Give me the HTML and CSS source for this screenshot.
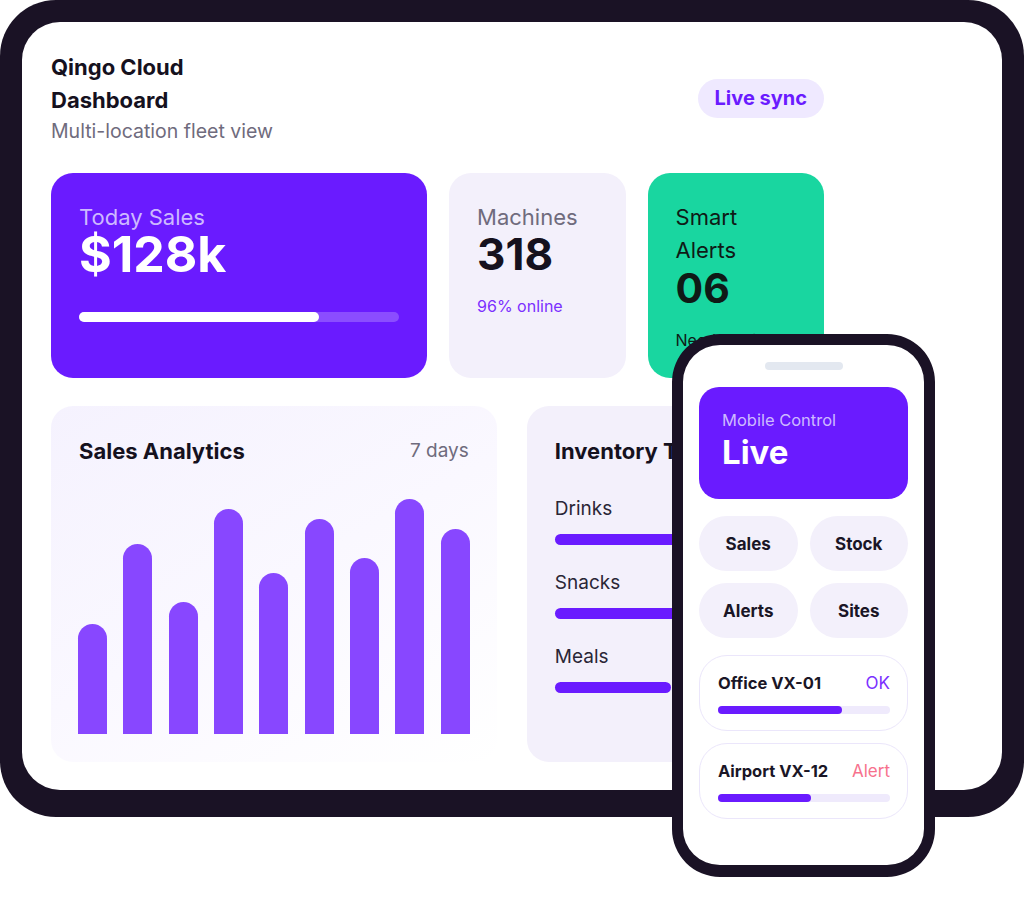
FILE: index.html
```html
<!DOCTYPE html>
<html lang="en">
<head>
<meta charset="utf-8">
<title>Qingo Cloud Dashboard</title>
<link rel="stylesheet" href="styles.css">
</head>
<body>
<div class="stage">
  <div class="tablet">
    <div class="screen">
      <div class="content">
        <header class="header">
          <div class="brand">
            <h1 class="brand-title">Qingo Cloud Dashboard</h1>
            <p class="brand-sub">Multi-location fleet view</p>
          </div>
          <span class="pill">Live sync</span>
        </header>

        <section class="stats">
          <div class="stat stat-sales">
            <div class="stat-label">Today Sales</div>
            <div class="stat-value stat-value-lg">$128k</div>
            <div class="progress"><div class="progress-fill" style="width:75%"></div></div>
          </div>
          <div class="stat stat-machines">
            <div class="stat-label">Machines</div>
            <div class="stat-value">318</div>
            <div class="stat-note">96% online</div>
          </div>
          <div class="stat stat-alerts">
            <div class="stat-label">Smart Alerts</div>
            <div class="stat-value stat-value-sm">06</div>
            <div class="stat-note">Needs action</div>
          </div>
        </section>

        <section class="panels">
          <div class="panel panel-chart">
            <div class="panel-head">
              <h2 class="panel-title">Sales Analytics</h2>
              <span class="panel-meta">7 days</span>
            </div>
            <div class="chart">
              <div class="bar" style="height:110px"></div>
              <div class="bar" style="height:190px"></div>
              <div class="bar" style="height:132px"></div>
              <div class="bar" style="height:225px"></div>
              <div class="bar" style="height:161px"></div>
              <div class="bar" style="height:215px"></div>
              <div class="bar" style="height:176px"></div>
              <div class="bar" style="height:235px"></div>
              <div class="bar" style="height:205px"></div>
            </div>
          </div>
          <div class="panel panel-inventory">
            <h2 class="panel-title">Inventory Trends</h2>
            <div class="inv-list">
              <div class="inv-item">
                <div class="inv-label">Drinks</div>
                <div class="inv-bar" style="width:82%"></div>
              </div>
              <div class="inv-item">
                <div class="inv-label">Snacks</div>
                <div class="inv-bar" style="width:70%"></div>
              </div>
              <div class="inv-item">
                <div class="inv-label">Meals</div>
                <div class="inv-bar" style="width:48%"></div>
              </div>
            </div>
          </div>
        </section>
      </div>
    </div>
  </div>

  <div class="phone">
    <div class="notch"></div>
    <div class="mobile-hero">
      <div class="mobile-label">Mobile Control</div>
      <div class="mobile-value">Live</div>
    </div>
    <div class="actions">
      <button class="action">Sales</button>
      <button class="action">Stock</button>
      <button class="action">Alerts</button>
      <button class="action">Sites</button>
    </div>
    <div class="devices">
      <div class="device">
        <div class="device-row">
          <span class="device-name">Office VX-01</span>
          <span class="device-status status-ok">OK</span>
        </div>
        <div class="device-track"><div class="device-fill" style="width:72%"></div></div>
      </div>
      <div class="device">
        <div class="device-row">
          <span class="device-name">Airport VX-12</span>
          <span class="device-status status-alert">Alert</span>
        </div>
        <div class="device-track"><div class="device-fill" style="width:54%"></div></div>
      </div>
    </div>
  </div>
</div>
</body>
</html>
```

FILE: styles.css
```css
* {
  box-sizing: border-box;
}

html, body {
  margin: 0;
  padding: 0;
  background: #ffffff;
}

body {
  font-family: "Inter", "Noto Sans", "Liberation Sans", sans-serif;
  color: #16121f;
}

h1, h2, p {
  margin: 0;
}

.stage {
  position: relative;
  width: 1024px;
  height: 906px;
  overflow: hidden;
}

/* Tablet frame */
.tablet {
  width: 1024px;
  height: 817px;
  padding: 22px 22px 27px 22px;
  background: #1a1225;
  border-radius: 56px;
}

.screen {
  height: 100%;
  background: #ffffff;
  border-radius: 38px;
  padding: 29px;
}

.content {
  width: 773px;
  display: flex;
  flex-direction: column;
  gap: 28px;
}

/* Header */
.header {
  display: flex;
  justify-content: space-between;
  align-items: center;
}

.brand {
  max-width: 230px;
}

.brand-title {
  font-size: 22px;
  line-height: 33px;
  font-weight: 700;
  color: #15111e;
}

.brand-sub {
  font-size: 19.5px;
  line-height: 28px;
  color: #6f6b7d;
}

.pill {
  display: inline-block;
  height: 39px;
  line-height: 39px;
  padding: 0 17px;
  border-radius: 20px;
  background: #efe9ff;
  color: #6a1bff;
  font-size: 20px;
  font-weight: 700;
}

/* Stat cards */
.stats {
  display: grid;
  grid-template-columns: 375fr 176fr 176fr;
  grid-template-rows: 205px;
  gap: 22px;
}

.stat {
  border-radius: 22px;
  padding: 28px;
  overflow: hidden;
}

.stat-label {
  font-size: 22px;
  line-height: 33px;
}

.stat-value {
  font-size: 44px;
  line-height: 40px;
  font-weight: 700;
}

.stat-value-lg {
  font-size: 50px;
  line-height: 41px;
}

.stat-value-sm {
  font-size: 41px;
  line-height: 42px;
}

.stat-note {
  font-size: 16px;
  line-height: 24px;
  margin-top: 20px;
}

.stat-sales {
  background: #6a1bff;
  color: #ffffff;
}

.stat-sales .stat-label {
  color: #cdb9ff;
}

.progress {
  margin-top: 37px;
  height: 10px;
  border-radius: 5px;
  background: #8b4dff;
}

.progress-fill {
  height: 100%;
  border-radius: 5px;
  background: #ffffff;
}

.stat-machines {
  background: #f3f0fb;
}

.stat-machines .stat-label {
  color: #6f6b7d;
}

.stat-machines .stat-value {
  color: #15111e;
}

.stat-machines .stat-note {
  color: #7b2fff;
}

.stat-alerts {
  background: #19d6a0;
  color: #0f1a16;
}

.stat-alerts .stat-note {
  margin-top: 19px;
}

/* Lower panels */
.panels {
  display: grid;
  grid-template-columns: 1.5fr 1fr;
  grid-template-rows: 356px;
  gap: 30px;
}

.panel {
  border-radius: 22px;
  padding: 28px;
  overflow: hidden;
}

.panel-title {
  font-size: 22px;
  line-height: 34px;
  font-weight: 700;
  color: #15111e;
  white-space: nowrap;
}

.panel-chart {
  background: linear-gradient(150deg, #f5f2fe 0%, #faf8ff 50%, #ffffff 100%);
  display: flex;
  flex-direction: column;
}

.panel-head {
  display: flex;
  justify-content: space-between;
  align-items: center;
}

.panel-meta {
  font-size: 19px;
  line-height: 34px;
  color: #6f6b7d;
}

.chart {
  flex: 1;
  display: flex;
  align-items: flex-end;
  justify-content: space-between;
  margin: 0 -1px;
}

.bar {
  width: 29px;
  background: #8847ff;
  border-radius: 15px 15px 0 0;
}

.panel-inventory {
  background: #f3f0fb;
}

.inv-list {
  margin-top: 28px;
  display: flex;
  flex-direction: column;
  gap: 25px;
}

.inv-label {
  font-size: 19px;
  line-height: 26px;
  color: #2a2636;
}

.inv-bar {
  margin-top: 12px;
  height: 11px;
  border-radius: 6px;
  background: #6a1bff;
}

/* Phone overlay */
.phone {
  position: absolute;
  left: 672px;
  top: 334px;
  width: 263px;
  height: 543px;
  background: #ffffff;
  border: 11px solid #1a1225;
  border-bottom-width: 12px;
  border-radius: 48px;
  padding: 17px 16px;
  display: flex;
  flex-direction: column;
  gap: 17px;
}

.notch {
  align-self: center;
  width: 78px;
  height: 8px;
  border-radius: 4px;
  background: #e3e8f0;
}

.mobile-hero {
  height: 112px;
  border-radius: 20px;
  background: #6a1bff;
  padding: 22px 23px;
}

.mobile-label {
  font-size: 16.5px;
  line-height: 22px;
  color: #cdb9ff;
}

.mobile-value {
  font-size: 33px;
  line-height: 42px;
  font-weight: 700;
  color: #ffffff;
}

.actions {
  display: grid;
  grid-template-columns: 1fr 1fr;
  gap: 12px;
}

.action {
  height: 55px;
  border: none;
  border-radius: 28px;
  background: #f3f0fb;
  font-family: inherit;
  font-size: 17px;
  font-weight: 700;
  color: #1a1626;
  padding: 0;
}

.devices {
  display: flex;
  flex-direction: column;
  gap: 12px;
}

.device {
  height: 76px;
  border: 1px solid #ebe6fb;
  border-radius: 28px;
  padding: 15px 17px 0 18px;
  background: #ffffff;
}

.device-row {
  display: flex;
  justify-content: space-between;
  align-items: center;
  line-height: 24px;
}

.device-name {
  font-size: 16.5px;
  font-weight: 700;
  color: #1a1626;
}

.device-status {
  font-size: 17px;
}

.status-ok {
  color: #7b2fff;
}

.status-alert {
  color: #f7718d;
}

.device-track {
  margin-top: 11px;
  height: 8px;
  border-radius: 4px;
  background: #efeafc;
}

.device-fill {
  height: 100%;
  border-radius: 4px;
  background: #6a1bff;
}
```
